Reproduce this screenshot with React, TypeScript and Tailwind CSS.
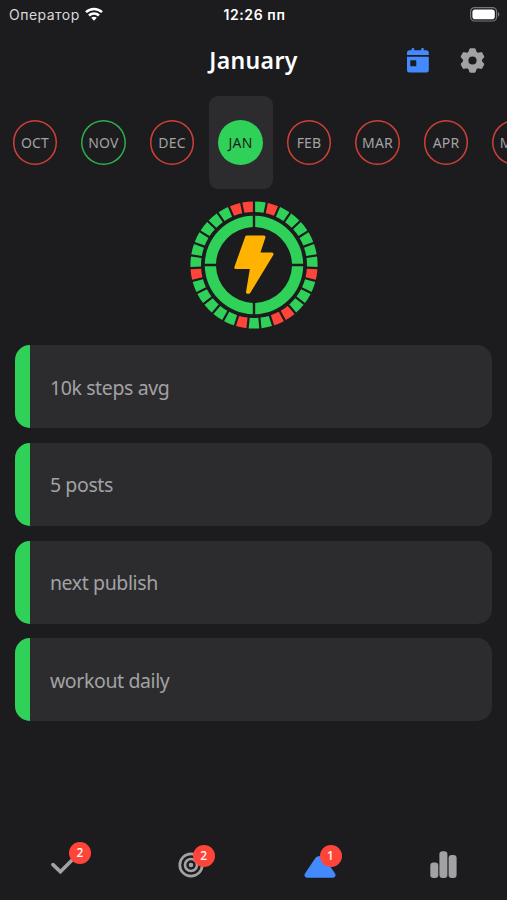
import clsx from "clsx"

type MonthState = "missed" | "done" | "selected"

const MONTHS: { label: string; state: MonthState }[] = [
  { label: "OCT", state: "missed" },
  { label: "NOV", state: "done" },
  { label: "DEC", state: "missed" },
  { label: "JAN", state: "selected" },
  { label: "FEB", state: "missed" },
  { label: "MAR", state: "missed" },
  { label: "APR", state: "missed" },
  { label: "MAY", state: "missed" },
]

const GOALS = ["10k steps avg", "5 posts", "next publish", "workout daily"]

/* Days of the month that were missed, counted from 0 */
const DAYS = 31
const MISSED_DAYS = [1, 8, 12, 13, 16, 22, 29, 30]

/* Annular segment with a constant-width gap on both sides */
function segment(inner: number, outer: number, from: number, to: number, gap: number) {
  const at = (r: number, deg: number, shift: number) => {
    const a = (deg * Math.PI) / 180 + shift / r
    return `${(r * Math.sin(a)).toFixed(2)} ${(-r * Math.cos(a)).toFixed(2)}`
  }
  const g = gap / 2
  return `M${at(outer, from, g)}A${outer} ${outer} 0 0 1 ${at(outer, to, -g)}L${at(inner, to, -g)}A${inner} ${inner} 0 0 0 ${at(inner, from, g)}Z`
}

function ProgressRing() {
  const step = 360 / DAYS
  return (
    <svg viewBox="-64 -64 128 128" className="h-32 w-32" aria-hidden>
      {Array.from({ length: DAYS }, (_, i) => (
        <path
          key={i}
          d={segment(53, 63.6, i * step, (i + 1) * step, 2.2)}
          fill={MISSED_DAYS.includes(i) ? "#ff453a" : "#30d158"}
        />
      ))}
      {[0, 1, 2, 3].map((i) => (
        <path key={i} d={segment(38, 49.2, i * 90, (i + 1) * 90, 2.4)} fill="#30d158" />
      ))}
      <path
        d="M-7.3 -28H10L4.4 -10.9H18L-5.1 27.2H-6.5L-2.4 2.4H-18.2Z"
        fill="#ffb300"
        stroke="#ffb300"
        strokeWidth="3"
        strokeLinejoin="round"
      />
    </svg>
  )
}

function StatusBar() {
  return (
    <div className="grid h-7 grid-cols-3 items-center pl-[9px] pr-[7px] font-['Inter',sans-serif] text-[14px] text-[#d8d8da]">
      <div className="flex items-center gap-[5px]">
        <span className="tracking-[0.48px]">Оператор</span>
        <svg viewBox="0 0 18 14" className="h-3.5 w-[18px]" fill="none" stroke="#fff" strokeWidth="2.5" aria-hidden>
          <path d="M1 5.2C5.5 .8 12.5 .8 17 5.2" />
          <path d="M4 8.5C6.8 5.7 11.2 5.7 14 8.5" />
          <path d="M6.2 10.8C7.8 9.3 10.2 9.3 11.8 10.8L9 13.7Z" fill="#fff" stroke="none" />
        </svg>
      </div>
      <div className="text-center font-semibold tracking-[0.6px] text-white">12:26 пп</div>
      <svg viewBox="0 0 30 15" className="h-[15px] w-[30px] justify-self-end" aria-hidden>
        <rect x=".6" y=".6" width="26" height="13.4" rx="4" fill="none" stroke="#77777a" strokeWidth="1.2" />
        <rect x="2.4" y="2.4" width="22.4" height="9.8" rx="2.8" fill="#fff" />
        <path d="M28 4.9C29.9 5.8 29.9 8.8 28 9.7Z" fill="#77777a" />
      </svg>
    </div>
  )
}

function CalendarIcon() {
  return (
    <svg viewBox="0 0 22 25" className="h-[25px] w-[22px]" fill="#448aff" aria-hidden>
      <rect x="4.6" y="0" width="2.6" height="5" rx="1" />
      <rect x="14.2" y="0" width="2.6" height="5" rx="1" />
      <path d="M2.8 2.2H19A2.8 2.8 0 0 1 21.8 5V7H0V5A2.8 2.8 0 0 1 2.8 2.2Z" />
      <path
        fillRule="evenodd"
        d="M0 8.8H21.8V22.2A2.2 2.2 0 0 1 19.6 24.4H2.2A2.2 2.2 0 0 1 0 22.2ZM3.9 12.3A.6.6 0 0 0 3.3 12.9V17.7A.6.6 0 0 0 3.9 18.3H8.7A.6.6 0 0 0 9.3 17.7V12.9A.6.6 0 0 0 8.7 12.3Z"
      />
    </svg>
  )
}

function GearIcon() {
  return (
    <svg viewBox="-12.5 -12.5 25 25" className="h-[25px] w-[25px]" fill="#a2a2a4" aria-hidden>
      <circle r="6.8" fill="none" stroke="#a2a2a4" strokeWidth="5.4" />
      {[0, 60, 120, 180, 240, 300].map((angle) => (
        <path
          key={angle}
          transform={`rotate(${angle})`}
          d="M-4.6 -7L-3.2 -11.2Q-2.9 -12.3 -1.8 -12.3H1.8Q2.9 -12.3 3.2 -11.2L4.6 -7Z"
        />
      ))}
    </svg>
  )
}

function Badge({ count, className }: { count: number; className: string }) {
  return (
    <span
      className={clsx(
        "absolute flex h-[22px] w-[22px] items-center justify-center rounded-full bg-[#ff453a] text-[12px] font-medium text-white",
        className,
      )}
    >
      {count}
    </span>
  )
}

export default function App() {
  return (
    <div className="flex h-[900px] w-[507px] flex-col overflow-hidden bg-[#1c1c1e] font-['Noto_Sans',sans-serif]">
      <StatusBar />

      {/* Title and actions */}
      <header className="grid h-[68px] grid-cols-3 items-center">
        <h1 className="relative -top-0.5 col-start-2 text-center text-[23px] font-semibold tracking-[0.35px] text-white">
          January
        </h1>
        <div className="flex items-center justify-end gap-[31px] pr-[22px] pb-1">
          <CalendarIcon />
          <GearIcon />
        </div>
      </header>

      {/* Month strip */}
      <div className="flex h-[93px] shrink-0 pl-[3px]">
        {MONTHS.map(({ label, state }) => (
          <div
            key={label}
            className={clsx(
              "mr-[4.5px] flex w-16 shrink-0 items-center justify-center rounded-[9px]",
              state === "selected" && "bg-[#2c2c2e]",
            )}
          >
            <div
              className={clsx(
                "flex h-[44.6px] w-[44.6px] items-center justify-center rounded-full text-[14px] tracking-[0.2px]",
                state === "selected" && "bg-[#30d158] text-[#1c1c1e]",
                state === "done" && "text-[#a2a2a4] shadow-[inset_0_0_0_1.5px_#2fae4e]",
                state === "missed" && "text-[#a2a2a4] shadow-[inset_0_0_0_1.5px_#cf4037]",
              )}
            >
              {label}
            </div>
          </div>
        ))}
      </div>

      <div className="flex justify-center pt-3">
        <ProgressRing />
      </div>

      {/* Goals */}
      <ul className="mt-[16.3px] flex flex-col gap-[14.7px] pl-[15.4px] pr-[15px]">
        {GOALS.map((title) => (
          <li key={title} className="flex h-[83px] items-center overflow-hidden rounded-[15px] bg-[#2c2c2e]">
            <span className="h-full w-[15px] bg-[#30d158]" />
            <span className="pl-[19.5px] pt-px text-[19.5px] tracking-[-0.38px] text-[#a2a2a4]">{title}</span>
          </li>
        ))}
      </ul>

      {/* Tab bar */}
      <nav className="mt-auto flex h-[70px] shrink-0 justify-around">
        <div className="relative h-full w-[127px]">
          <svg viewBox="0 0 26 20" className="ml-[50px] mt-[25px] h-5 w-[26px]" fill="none" aria-hidden>
            <path d="M3 9.6L10.4 16.8L23.6 3.4" stroke="#a2a2a4" strokeWidth="3.6" strokeLinecap="round" />
          </svg>
          <Badge count={2} className="left-[69px] top-[12px]" />
        </div>
        <div className="relative h-full w-[127px]">
          <svg viewBox="-13 -13 26 26" className="ml-[51px] mt-[22px] h-[26px] w-[26px]" fill="none" stroke="#a2a2a4" strokeWidth="2.7" aria-hidden>
            <circle r="11.2" />
            <circle r="6" />
            <circle r="2.3" fill="#a2a2a4" stroke="none" />
          </svg>
          <Badge count={2} className="left-[66px] top-[14.5px]" />
        </div>
        <div className="relative h-full w-[127px]">
          <svg viewBox="0 0 32 23" className="ml-[50.5px] mt-[25px] h-[23px] w-8" fill="#448aff" aria-hidden>
            <path d="M11.4 2.9C13.4 .2 18.6 .2 20.6 2.9L31 18.6C32.2 20.6 31 22.8 28.8 22.8H3.2C1 22.8 -.2 20.6 1 18.6Z" />
          </svg>
          <Badge count={1} className="left-[66px] top-[14.5px]" />
        </div>
        <div className="h-full w-[127px]">
          <svg viewBox="0 0 27 28" className="ml-[50px] mt-[21px] h-7 w-[27px]" fill="#a2a2a4" aria-hidden>
            <rect x=".3" y="11.5" width="8" height="15.5" rx="3.2" />
            <rect x="9.4" y=".3" width="8" height="26.7" rx="3.2" />
            <rect x="18.6" y="4" width="8" height="23" rx="3.2" />
          </svg>
        </div>
      </nav>
    </div>
  )
}
